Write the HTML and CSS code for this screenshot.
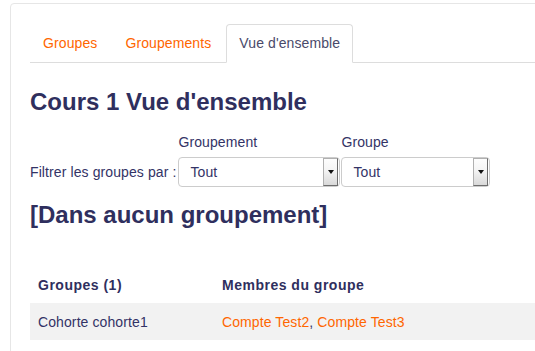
FILE: index.html
```html
<!DOCTYPE html>
<html lang="fr">
<head>
  <meta charset="UTF-8">
  <title>Vue d'ensemble</title>
  <link rel="stylesheet" href="styles.css">
</head>
<body>
  <div class="page">
    <div class="card">

      <!-- Onglets -->
      <ul class="tabs">
        <li><a href="#">Groupes</a></li>
        <li><a href="#">Groupements</a></li>
        <li class="active"><a href="#">Vue d'ensemble</a></li>
      </ul>

      <h2 class="title">Cours 1 Vue d'ensemble</h2>

      <!-- Filtre -->
      <form class="filter">
        <span class="filter-label">Filtrer les groupes par :</span>
        <div class="field field-wide">
          <label>Groupement</label>
          <div class="select">
            <span class="select-value">Tout</span>
            <span class="select-btn"><span class="arrow"></span></span>
          </div>
        </div>
        <div class="field">
          <label>Groupe</label>
          <div class="select">
            <span class="select-value">Tout</span>
            <span class="select-btn"><span class="arrow"></span></span>
          </div>
        </div>
      </form>

      <h2 class="title title-group">[Dans aucun groupement]</h2>

      <!-- Tableau -->
      <table class="groups">
        <thead>
          <tr>
            <th class="col-group">Groupes (1)</th>
            <th>Membres du groupe</th>
          </tr>
        </thead>
        <tbody>
          <tr>
            <td>Cohorte cohorte1</td>
            <td><a href="#">Compte Test2</a>, <a href="#">Compte Test3</a></td>
          </tr>
        </tbody>
      </table>

    </div>
  </div>
</body>
</html>
```

FILE: styles.css
```css
html, body {
  margin: 0;
  padding: 0;
  background: #fff;
  overflow: hidden;
}

body {
  font-family: "Liberation Sans", Arial, sans-serif;
  font-size: 14px;
  letter-spacing: 0.1px;
  color: #333366;
}

a {
  color: #ff6600;
  text-decoration: none;
}

.page {
  padding: 3px 0 0 10px;
  height: 348px;
  overflow: hidden;
}

.card {
  width: 600px;
  height: 400px;
  border: 1px solid #e6e6e6;
  border-radius: 4px 0 0 0;
  padding: 20px 0 0 19px;
  box-sizing: border-box;
}

/* onglets */
.tabs {
  list-style: none;
  margin: 0;
  padding: 0;
  display: flex;
  border-bottom: 1px solid #dddddd;
}

.tabs li {
  margin-right: 2px;
  margin-bottom: -1px;
}

.tabs a {
  display: block;
  padding: 10px 12px;
  line-height: 17px;
  border: 1px solid transparent;
  border-radius: 4px 4px 0 0;
}

.tabs .active a {
  color: #4a4a6a;
  background: #fff;
  border-color: #dddddd #dddddd #fff;
}

.title {
  font-size: 24px;
  font-weight: bold;
  line-height: 26px;
  letter-spacing: 0;
  margin: 26px 0 0;
  color: #2f2f5e;
}

/* filtre */
.filter {
  display: flex;
  align-items: flex-end;
  margin-top: 19px;
}

.filter-label {
  line-height: 30px;
  margin-right: 2px;
}

.field {
  display: flex;
  flex-direction: column;
  margin-right: 1px;
}

.field label {
  line-height: 17px;
  margin-bottom: 6px;
}

.select {
  display: flex;
  align-items: center;
  width: 149px;
  height: 30px;
  box-sizing: border-box;
  border: 1px solid #cccccc;
  border-radius: 4px;
  padding: 0 1px 0 11px;
  background: #fff;
}

.field-wide .select {
  width: 162px;
}

.select-value {
  flex: 1;
  color: #333366;
}

.select-btn {
  width: 15px;
  height: 28px;
  box-sizing: border-box;
  border: 1px solid #6e6e6e;
  border-top-color: #b0b0b0;
  border-left-color: #b0b0b0;
  background: linear-gradient(#fdfdfd, #f4f4f4 45%, #d9d9d9);
  display: flex;
  align-items: center;
  justify-content: center;
}

.arrow {
  width: 0;
  height: 0;
  border-left: 3.5px solid transparent;
  border-right: 3.5px solid transparent;
  border-top: 4px solid #111;
}

.title-group {
  margin-top: 15px;
}

/* tableau */
.groups {
  width: 100%;
  table-layout: fixed;
  margin-top: 39px;
  border-collapse: collapse;
  text-align: left;
}

.groups th,
.groups td {
  padding: 0 8px;
  height: 36px;
  vertical-align: middle;
}

.groups th {
  font-weight: bold;
  letter-spacing: 0.5px;
  color: #2f2f5e;
}

.groups .col-group {
  width: 168px;
}

.groups tbody tr {
  background: #f2f2f2;
}

.groups td {
  height: 37px;
}
```
